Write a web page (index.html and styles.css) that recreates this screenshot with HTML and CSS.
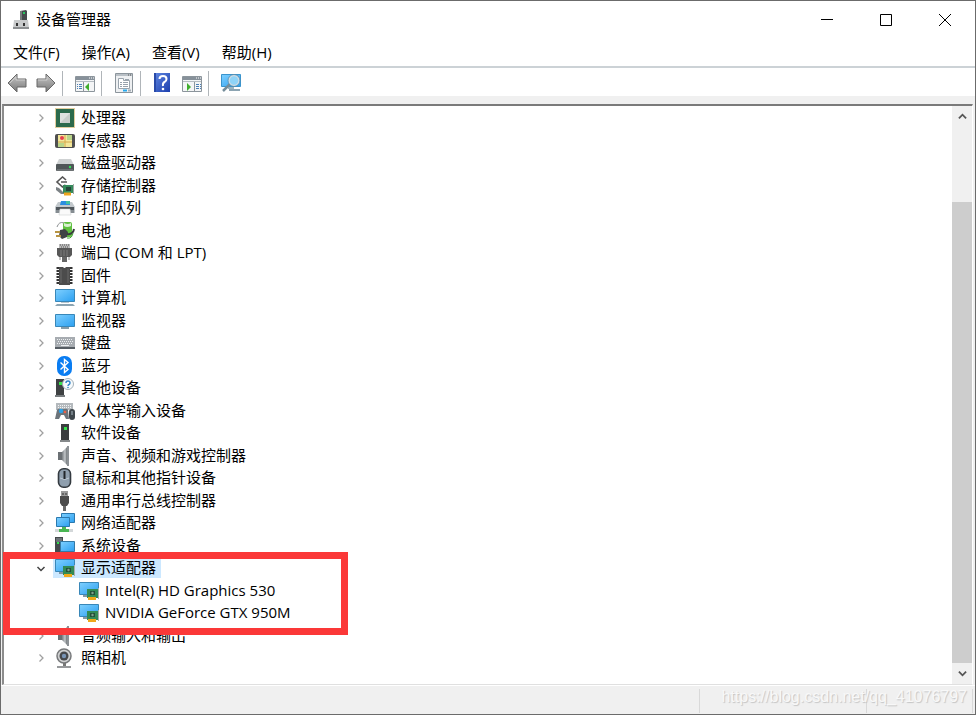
FILE: index.html
```html
<!DOCTYPE html>
<html lang="zh-CN">
<head>
    <meta charset="UTF-8">
    <meta name="viewport" content="width=device-width, initial-scale=1.0">
    <title>设备管理器</title>
    <link rel="stylesheet" href="styles.css">
</head>
<body>
    <!-- icon sprite -->
    <svg class="sprite" aria-hidden="true">
        <defs>
            <linearGradient id="g-screen" x1="0" y1="0" x2="1" y2="1">
                <stop offset="0" stop-color="#7fd0ff"/>
                <stop offset="1" stop-color="#2b9ff0"/>
            </linearGradient>
            <linearGradient id="g-metal" x1="0" y1="0" x2="0" y2="1">
                <stop offset="0" stop-color="#c9c9c9"/>
                <stop offset="1" stop-color="#777"/>
            </linearGradient>
            <linearGradient id="g-help" x1="0" y1="0" x2="1" y2="1">
                <stop offset="0" stop-color="#5f86e0"/>
                <stop offset="1" stop-color="#1c3fae"/>
            </linearGradient>
            <linearGradient id="g-cone" x1="0" y1="0" x2="1" y2="0">
                <stop offset="0" stop-color="#777c80"/>
                <stop offset="0.6" stop-color="#c3c7ca"/>
                <stop offset="1" stop-color="#6e7376"/>
            </linearGradient>
        </defs>
        <symbol id="i-app" viewBox="0 0 18 20">
            <path d="M8 1l6-1 1 1v10H8z" fill="#454a4d"/>
            <path d="M8 1l2 0v10H8z" fill="#777b7d"/>
            <rect x="11" y="2" width="2" height="2" fill="#27c860"/>
            <path d="M2 10h14l1 8H1z" fill="#c9cbcc"/>
            <path d="M1 17h16v2H1z" fill="#8d9092"/>
            <rect x="4" y="13" width="2" height="3" fill="#333"/>
            <rect x="11" y="13" width="2" height="3" fill="#333"/>
        </symbol>
        <symbol id="i-back" viewBox="0 0 20 20">
            <path d="M1 10l9-9v5h9v8h-9v5z" fill="url(#g-metal)" stroke="#696969" stroke-linejoin="round"/>
            <path d="M3 10l6-6v3h9" fill="none" stroke="#ccc"/>
        </symbol>
        <symbol id="i-forward" viewBox="0 0 20 20">
            <path d="M19 10l-9-9v5H1v8h9v5z" fill="url(#g-metal)" stroke="#696969" stroke-linejoin="round"/>
            <path d="M2 7h9V4" fill="none" stroke="#ccc"/>
        </symbol>
        <symbol id="i-tree" viewBox="0 0 20 20">
            <path d="M.5 3.500h19v15H.5z" fill="#f4f5f6" stroke="#8c959c"/>
            <path d="M1 4h18v3H1z" fill="#87919a"/>
            <path d="M14 5h1M16 5h1M18 5h1" stroke="#fff"/>
            <path d="M1 8.500h18" stroke="#b5bcc2"/>
            <path d="M8.500 9v9" stroke="#8c959c"/>
            <path d="M2 11.500h1m1 0h3M2 13.500h1m1 0h3M2 15.500h1m1 0h3" stroke="#4b7fb5"/>
            <path d="M14 10v8l-4-4z" fill="#3fae2c"/>
        </symbol>
        <symbol id="i-props" viewBox="0 0 20 20">
            <path d="M1.500.5h17v19h-17z" fill="#eef0f2" stroke="#8c959c"/>
            <path d="M2 1h16v2H2z" fill="#b9c0c6"/>
            <path d="M14 2h1M16 2h1" stroke="#555"/>
            <path d="M4.500 5.500h5v2h6v8h-11z" fill="#fff" stroke="#9aa4ad"/>
            <path d="M11 6.500h4" stroke="#9aa4ad"/>
            <path d="M6 9.500h2m1 0h5M6 11.500h2m1 0h5M6 13.500h2m1 0h5" stroke="#98a2ac"/>
            <path d="M9 17.500h4" stroke="#25a9ee" stroke-width="2"/>
            <path d="M14 17.500h3" stroke="#a7afb6" stroke-width="2"/>
        </symbol>
        <symbol id="i-help" viewBox="0 0 20 20">
            <path d="M1 0h16v19H1z" fill="url(#g-help)"/>
            <path d="M1 0h2v19H1z" fill="#294aa8"/>
            <path d="M6.500 6Q6.500 3 10 3t3.500 3q0 2-2 3t-1.500 4" fill="none" stroke="#fff" stroke-width="2"/>
            <circle cx="10" cy="16" r="1.300" fill="#fff"/>
        </symbol>
        <symbol id="i-action" viewBox="0 0 20 20">
            <path d="M.5 3.500h19v15H.5z" fill="#f4f5f6" stroke="#8c959c"/>
            <path d="M1 4h18v3H1z" fill="#87919a"/>
            <path d="M14 5h1M16 5h1M18 5h1" stroke="#fff"/>
            <path d="M1 8.500h18" stroke="#b5bcc2"/>
            <path d="M12.500 9v9" stroke="#8c959c"/>
            <path d="M14 11.500h3m1 0h1M14 13.500h3m1 0h1M14 15.500h3m1 0h1" stroke="#4b7fb5"/>
            <path d="M5 10v8l4-4z" fill="#3fae2c"/>
        </symbol>
        <symbol id="i-scan" viewBox="0 0 20 20">
            <path d="M.5 1.500h19v12H.5z" fill="url(#g-screen)" stroke="#3a94cd"/>
            <path d="M7 14h6v2H7z" fill="#9db4c0"/>
            <path d="M8 17h11" stroke="#8ca4b2" stroke-width="2"/>
            <path d="M9 11l-7 7" stroke="#758d9a" stroke-width="2.500"/>
            <circle cx="13" cy="7.500" r="5" fill="#8fd3f7" stroke="#cfdce3" stroke-width="1.500"/>
            <circle cx="13" cy="7.500" r="6" fill="none" stroke="#5f8ba6" stroke-width=".7"/>
        </symbol>

        <symbol id="i-cpu" viewBox="0 0 20 20">
            <path d="M.5.5h19v19H.5z" fill="none" stroke="#c59a3c" stroke-dasharray="1 1"/>
            <path d="M1 1h18v18H1z" fill="#2c6a4c"/>
            <path d="M5 5h10v10H5z" fill="#dfe2e0"/>
            <path d="M5 15L15 5v10z" fill="#c9cecb"/>
        </symbol>
        <symbol id="i-sensor" viewBox="0 0 20 20">
            <rect y="3" width="20" height="14" rx="2" fill="#505050"/>
            <path d="M3 4h14v12H3z" fill="#f3e79b"/>
            <path d="M12 4h5v5h-5zM3 12h6v4H3z" fill="#b9d58a"/>
            <path d="M3 11h14M10 4v12" stroke="#d3a94c"/>
            <circle cx="7" cy="7" r="2" fill="#e8404e"/>
        </symbol>
        <symbol id="i-disk" viewBox="0 0 20 20">
            <path d="M4 6h12l3 6H1z" fill="#cfd2d3"/>
            <rect x="1" y="11" width="18" height="7" rx="1" fill="#505658"/>
            <path d="M2 17h16" stroke="#898e90"/>
            <circle cx="15" cy="14" r="1.200" fill="#36e05b"/>
        </symbol>
        <symbol id="i-storage" viewBox="0 0 20 20">
            <path d="M11 4L7.500 1 2 6l5.500 5 3-2M6 6h6" fill="none" stroke="#555" stroke-width="1.600"/>
            <path d="M1 11l3 1 5 5v1H6l-5-4z" fill="#7c8285"/>
            <path d="M8 9h10v8H8z" fill="#358a5b"/>
            <path d="M11 11h5v4h-5z" fill="#24463a"/>
            <path d="M18.500 8v10" stroke="#a1aaa6"/>
            <path d="M9 18h7" stroke="#eda51e" stroke-width="3"/>
        </symbol>
        <symbol id="i-printer" viewBox="0 0 20 20">
            <path d="M3 4h14l3 5v6H0V9z" fill="#c3c9cd"/>
            <path d="M6 3h9v4H5z" fill="#2a8de0"/>
            <path d="M11 3h4v3h-4z" fill="#41c0a1"/>
            <path d="M1 9h18v3H1z" fill="#50575c"/>
            <path d="M1 12h18v3H1z" fill="#858c91"/>
            <path d="M5 11h10l1 6H4z" fill="#fafafa" stroke="#c5c8ca" stroke-width=".5"/>
        </symbol>
        <symbol id="i-battery" viewBox="0 0 20 20">
            <rect x="8" y="1" width="9" height="15" rx="2" fill="#5fc03f"/>
            <path d="M9 2q4 2 7 0v3q-4 2-7 0z" fill="#d8efd0"/>
            <path d="M2 6q2-6 7-4" fill="none" stroke="#8b8f90"/>
            <path d="M5 9l5-1 3 3-1 5-5 2-3-3z" fill="#3f4345"/>
            <path d="M0 11h5M1 15h5" stroke="#b79444" stroke-width="2"/>
            <path d="M12 13q6 1 7-5" fill="none" stroke="#383b3d" stroke-width="2"/>
            <path d="M12 17q5 1 6-5" fill="none" stroke="#45a33b"/>
        </symbol>
        <symbol id="i-port" viewBox="0 0 20 20">
            <path d="M4 1h11v4H4z" fill="#bbb"/>
            <path d="M5 2h9M6 4h7" stroke="#555" stroke-dasharray="1 1"/>
            <path d="M2 5h15v7l-2 2H4l-2-2z" fill="#575757"/>
            <path d="M6 7v6M9 7v6M12 7v6" stroke="#7d7d7d"/>
            <path d="M7 14h5v5H7z" fill="#666"/>
            <path d="M5 14v3M14 14v3" stroke="#888"/>
        </symbol>
        <symbol id="i-firmware" viewBox="0 0 20 20">
            <path d="M4 1v18M15 1v18" stroke="#333" stroke-width="5" stroke-dasharray="2 1"/>
            <path d="M4 1h4q1.500 2 3 0h4v18H4z" fill="#4c4c4c"/>
            <path d="M6 3v14M13 3v14" stroke="#686868"/>
        </symbol>
        <symbol id="i-computer" viewBox="0 0 20 20">
            <path d="M.5 1.500h19v12H.5z" fill="url(#g-screen)" stroke="#3987b8"/>
            <path d="M6 14h8v1H6z" fill="#b9c6ce"/>
            <path d="M2 16h16l2 2H0z" fill="#8ca4b2"/>
        </symbol>
        <symbol id="i-monitor" viewBox="0 0 20 20">
            <path d="M.5 3.500h19v12H.5z" fill="url(#g-screen)" stroke="#3987b8"/>
            <path d="M6 17h8" stroke="#879da9" stroke-width="2"/>
        </symbol>
        <symbol id="i-keyboard" viewBox="0 0 20 20">
            <path d="M0 4h20v10H0z" fill="#a7acb1"/>
            <path d="M0 14h20v2H0z" fill="#565d64"/>
            <path d="M2 6.500h16M3 8.500h15M2 10.500h16" stroke="#edf0f2" stroke-dasharray="1 1"/>
            <path d="M6 12.500h8" stroke="#edf0f2"/>
        </symbol>
        <symbol id="i-bluetooth" viewBox="0 0 20 20">
            <rect x="2" width="15" height="20" rx="7" fill="#0a7df2"/>
            <path d="M5.500 6.500l7.500 7-3.500 3V3.500L13 6.500l-7.500 7" fill="none" stroke="#fff" stroke-width="1.400"/>
        </symbol>
        <symbol id="i-other" viewBox="0 0 20 20">
            <path d="M1 1h8v16H1z" fill="#3e4143"/>
            <path d="M0 17h10v2H0z" fill="#777c7f"/>
            <rect x="4" y="4" width="3" height="3" fill="#37e24c"/>
            <circle cx="13" cy="6" r="5.500" fill="#f6fafc" stroke="#a5b1b8"/>
            <path d="M11 5q0-2 2-2t2 2q0 1-1 1.500T13 8" fill="none" stroke="#2f82c7" stroke-width="1.400"/>
            <circle cx="13" cy="9.500" r=".8" fill="#2f82c7"/>
        </symbol>
        <symbol id="i-hid" viewBox="0 0 20 20">
            <path d="M1 2h17v7H1z" fill="#b4b9bd"/>
            <path d="M3 4.500h14M3 6.500h14" stroke="#f2f4f5" stroke-dasharray="1 1"/>
            <path d="M2 9q1-2 4-1h3q3-1 4 1l1 9h-3l-2-4H6l-2 4H0z" fill="#6c747b"/>
            <circle cx="6" cy="10" r="2.200" fill="#2ba2e9"/>
            <circle cx="10" cy="11" r="1.300" fill="#eb6048"/>
            <rect x="14" y="8" width="6" height="11" rx="3" fill="#3e464c"/>
            <path d="M17 10v4" stroke="#a9b8c2"/>
        </symbol>
        <symbol id="i-software" viewBox="0 0 20 20">
            <path d="M6 1h8v16H6z" fill="#3b3d3f"/>
            <path d="M5 17h10v2H5z" fill="#85898b"/>
            <rect x="9" y="4" width="3" height="3" fill="#35e24b"/>
        </symbol>
        <symbol id="i-speaker" viewBox="0 0 20 20">
            <path d="M3 6h4v8H3z" fill="#6b7074"/>
            <path d="M7 6l5-5v18l-5-5z" fill="url(#g-cone)"/>
            <path d="M12 0h2v20h-2z" fill="#8d9296"/>
        </symbol>
        <symbol id="i-mouse" viewBox="0 0 20 20">
            <rect x="3.500" y=".8" width="12" height="18.400" rx="5" fill="#8f9fae" stroke="#343a40" stroke-width="1.600"/>
            <path d="M5 10q5 3 9 0" fill="none" stroke="#bdcad5"/>
            <path d="M9.500 3v8" stroke="#22272b" stroke-width="2"/>
        </symbol>
        <symbol id="i-usb" viewBox="0 0 20 20">
            <path d="M6 0h7v6H6z" fill="#9b9b9b"/>
            <path d="M8 2v2M11 2v2" stroke="#333"/>
            <path d="M5 5h9v7l-2 3H7l-2-3z" fill="#4c4c4c"/>
            <path d="M8 15h3v5H8z" fill="#696969"/>
        </symbol>
        <symbol id="i-network" viewBox="0 0 20 20">
            <path d="M6.500.5h13v9h-13z" fill="url(#g-screen)" stroke="#2b79ae"/>
            <path d="M1.500 4.500h13v9h-13z" fill="url(#g-screen)" stroke="#2b79ae"/>
            <path d="M0 16h18v3H0z" fill="#d3d7d9"/>
            <path d="M7 14h4v2h3v3H4v-3h3z" fill="#49b653"/>
        </symbol>
        <symbol id="i-system" viewBox="0 0 20 20">
            <path d="M0 1h8v17H0z" fill="#45494c"/>
            <path d="M1 3h6M1 5h6" stroke="#96a0a5"/>
            <rect x="2" y="6" width="2" height="2" fill="#34df4d"/>
            <path d="M5.500 5.500h14v10h-14z" fill="url(#g-screen)" stroke="#3479a5"/>
            <path d="M8 17h9" stroke="#8d9fa9" stroke-width="2"/>
        </symbol>
        <symbol id="i-display" viewBox="0 0 20 20">
            <path d="M.5 1.500h19v12H.5z" fill="url(#g-screen)" stroke="#3987b8"/>
            <path d="M4 15h5" stroke="#8499a5" stroke-width="2"/>
            <path d="M8 8h11v9H8z" fill="#328a55"/>
            <path d="M11 10h5v4h-5z" fill="#23523a"/>
            <circle cx="13.500" cy="12" r="1.200" fill="#7fa18d"/>
            <path d="M19.500 7v11" stroke="#a8aeb0"/>
            <path d="M9 17.500h8" stroke="#efa91b" stroke-width="3"/>
        </symbol>
        <symbol id="i-camera" viewBox="0 0 20 20">
            <circle cx="9" cy="8" r="7" fill="#d0d1d2" stroke="#77797b" stroke-width="1.500"/>
            <circle cx="9" cy="8" r="4.500" fill="#46484b"/>
            <circle cx="9" cy="8" r="2.200" fill="#7894b5"/>
            <path d="M8 15h3v3H8z" fill="#777"/>
            <path d="M2 19h14" stroke="#96989a" stroke-width="2"/>
        </symbol>
        <symbol id="i-closed" viewBox="0 0 10 10">
            <path d="M3.500 1.500L7 5 3.500 8.500" fill="none" stroke="#a0a0a0" stroke-width="1.300"/>
        </symbol>
        <symbol id="i-open" viewBox="0 0 10 10">
            <path d="M1.500 4L5 7.500 8.500 4" fill="none" stroke="#444" stroke-width="1.500"/>
        </symbol>
    </svg>

    <div class="window">
        <header class="titlebar">
            <svg class="app-icon"><use href="#i-app"/></svg>
            <h1>设备管理器</h1>
            <div class="window-buttons">
                <button type="button" aria-label="最小化"><svg viewBox="0 0 12 12"><path d="M0 5.500h12"/></svg></button>
                <button type="button" aria-label="最大化"><svg viewBox="0 0 12 12"><path d="M.5.500h11v11H.5z"/></svg></button>
                <button type="button" aria-label="关闭"><svg viewBox="0 0 12 12"><path d="M0 0l12 12M12 0L0 12"/></svg></button>
            </div>
        </header>

        <nav class="menubar">
            <button type="button">文件(F)</button>
            <button type="button">操作(A)</button>
            <button type="button">查看(V)</button>
            <button type="button">帮助(H)</button>
        </nav>

        <div class="toolbar">
            <button type="button" aria-label="后退"><svg class="icon"><use href="#i-back"/></svg></button>
            <button type="button" aria-label="前进"><svg class="icon"><use href="#i-forward"/></svg></button>
            <span class="separator"></span>
            <button type="button" aria-label="显示/隐藏控制台树"><svg class="icon"><use href="#i-tree"/></svg></button>
            <span class="separator"></span>
            <button type="button" aria-label="属性"><svg class="icon"><use href="#i-props"/></svg></button>
            <span class="separator"></span>
            <button type="button" aria-label="帮助"><svg class="icon"><use href="#i-help"/></svg></button>
            <button type="button" aria-label="显示/隐藏操作窗格"><svg class="icon"><use href="#i-action"/></svg></button>
            <span class="separator"></span>
            <button type="button" aria-label="扫描检测硬件改动"><svg class="icon"><use href="#i-scan"/></svg></button>
        </div>

        <main class="panel">
            <ul class="tree">
                <li><button type="button" class="expander" aria-label="展开"><svg><use href="#i-closed"/></svg></button><svg class="icon"><use href="#i-cpu"/></svg><span class="name">处理器</span></li>
                <li><button type="button" class="expander" aria-label="展开"><svg><use href="#i-closed"/></svg></button><svg class="icon"><use href="#i-sensor"/></svg><span class="name">传感器</span></li>
                <li><button type="button" class="expander" aria-label="展开"><svg><use href="#i-closed"/></svg></button><svg class="icon"><use href="#i-disk"/></svg><span class="name">磁盘驱动器</span></li>
                <li><button type="button" class="expander" aria-label="展开"><svg><use href="#i-closed"/></svg></button><svg class="icon"><use href="#i-storage"/></svg><span class="name">存储控制器</span></li>
                <li><button type="button" class="expander" aria-label="展开"><svg><use href="#i-closed"/></svg></button><svg class="icon"><use href="#i-printer"/></svg><span class="name">打印队列</span></li>
                <li><button type="button" class="expander" aria-label="展开"><svg><use href="#i-closed"/></svg></button><svg class="icon"><use href="#i-battery"/></svg><span class="name">电池</span></li>
                <li><button type="button" class="expander" aria-label="展开"><svg><use href="#i-closed"/></svg></button><svg class="icon"><use href="#i-port"/></svg><span class="name">端口 (COM 和 LPT)</span></li>
                <li><button type="button" class="expander" aria-label="展开"><svg><use href="#i-closed"/></svg></button><svg class="icon"><use href="#i-firmware"/></svg><span class="name">固件</span></li>
                <li><button type="button" class="expander" aria-label="展开"><svg><use href="#i-closed"/></svg></button><svg class="icon"><use href="#i-computer"/></svg><span class="name">计算机</span></li>
                <li><button type="button" class="expander" aria-label="展开"><svg><use href="#i-closed"/></svg></button><svg class="icon"><use href="#i-monitor"/></svg><span class="name">监视器</span></li>
                <li><button type="button" class="expander" aria-label="展开"><svg><use href="#i-closed"/></svg></button><svg class="icon"><use href="#i-keyboard"/></svg><span class="name">键盘</span></li>
                <li><button type="button" class="expander" aria-label="展开"><svg><use href="#i-closed"/></svg></button><svg class="icon"><use href="#i-bluetooth"/></svg><span class="name">蓝牙</span></li>
                <li><button type="button" class="expander" aria-label="展开"><svg><use href="#i-closed"/></svg></button><svg class="icon"><use href="#i-other"/></svg><span class="name">其他设备</span></li>
                <li><button type="button" class="expander" aria-label="展开"><svg><use href="#i-closed"/></svg></button><svg class="icon"><use href="#i-hid"/></svg><span class="name">人体学输入设备</span></li>
                <li><button type="button" class="expander" aria-label="展开"><svg><use href="#i-closed"/></svg></button><svg class="icon"><use href="#i-software"/></svg><span class="name">软件设备</span></li>
                <li><button type="button" class="expander" aria-label="展开"><svg><use href="#i-closed"/></svg></button><svg class="icon"><use href="#i-speaker"/></svg><span class="name">声音、视频和游戏控制器</span></li>
                <li><button type="button" class="expander" aria-label="展开"><svg><use href="#i-closed"/></svg></button><svg class="icon"><use href="#i-mouse"/></svg><span class="name">鼠标和其他指针设备</span></li>
                <li><button type="button" class="expander" aria-label="展开"><svg><use href="#i-closed"/></svg></button><svg class="icon"><use href="#i-usb"/></svg><span class="name">通用串行总线控制器</span></li>
                <li><button type="button" class="expander" aria-label="展开"><svg><use href="#i-closed"/></svg></button><svg class="icon"><use href="#i-network"/></svg><span class="name">网络适配器</span></li>
                <li><button type="button" class="expander" aria-label="展开"><svg><use href="#i-closed"/></svg></button><svg class="icon"><use href="#i-system"/></svg><span class="name">系统设备</span></li>
                <li class="selected"><button type="button" class="expander" aria-label="折叠"><svg><use href="#i-open"/></svg></button><svg class="icon"><use href="#i-display"/></svg><span class="name">显示适配器</span></li>
                <li class="child"><svg class="icon"><use href="#i-display"/></svg><span class="name">Intel(R) HD Graphics 530</span></li>
                <li class="child"><svg class="icon"><use href="#i-display"/></svg><span class="name">NVIDIA GeForce GTX 950M</span></li>
                <li><button type="button" class="expander" aria-label="展开"><svg><use href="#i-closed"/></svg></button><svg class="icon"><use href="#i-speaker"/></svg><span class="name">音频输入和输出</span></li>
                <li><button type="button" class="expander" aria-label="展开"><svg><use href="#i-closed"/></svg></button><svg class="icon"><use href="#i-camera"/></svg><span class="name">照相机</span></li>
            </ul>
            <div class="scrollbar">
                <button type="button" aria-label="向上滚动"><svg viewBox="0 0 10 10"><path d="M1 7l4-4 4 4"/></svg></button>
                <div class="track"><div class="thumb"></div></div>
                <button type="button" aria-label="向下滚动"><svg viewBox="0 0 10 10"><path d="M1 3l4 4 4-4"/></svg></button>
            </div>
            <div class="marker"></div>
        </main>

        <footer class="statusbar">
            <span class="cell"></span>
            <span class="cell"></span>
            <span class="cell"></span>
            <span class="watermark">https://blog.csdn.net/qq_41076797</span>
        </footer>
    </div>
</body>
</html>
```
FILE: styles.css
```css
* {
    box-sizing: border-box;
}

body {
    margin: 0;
    font-family: "Open Sans", "Noto Sans CJK SC", sans-serif;
    font-size: 15px;
    line-height: 18px;
    color: #000;
    background-color: #fff;
}

button {
    padding: 0;
    border: none;
    background: none;
    font: inherit;
    color: inherit;
}

svg {
    display: block;
}

.sprite {
    position: absolute;
    width: 0;
    height: 0;
}

.icon {
    width: 20px;
    height: 20px;
    flex: none;
}

.window {
    display: flex;
    flex-direction: column;
    min-height: 100vh;
    border: 1px solid #6b6b6b;
    background-color: #f0f0f0;
}

/* title bar */
.titlebar {
    display: flex;
    align-items: center;
    height: 37px;
    padding: 0 1px 0 11px;
    background-color: #fff;
}

.app-icon {
    width: 18px;
    height: 20px;
}

.titlebar h1 {
    margin: 0 0 0 6px;
    padding-bottom: 2px;
    font-size: 15px;
    font-weight: normal;
}

.window-buttons {
    display: flex;
    align-self: stretch;
    margin-left: auto;
}

.window-buttons button {
    display: flex;
    align-items: center;
    justify-content: center;
    width: 59px;
}

.window-buttons svg {
    width: 12px;
    height: 12px;
    fill: none;
    stroke: #000;
}

/* menu */
.menubar {
    display: flex;
    gap: 2px;
    height: 30px;
    padding-left: 2px;
    background-color: #fff;
    border-bottom: 2px solid #ccd2d6;
}

.menubar button {
    padding: 0 10px;
}

/* toolbar */
.toolbar {
    display: flex;
    align-items: center;
    height: 28px;
    padding: 2px 0 0 6px;
    background-color: #fff;
}

.toolbar button + button {
    margin-left: 9px;
}

.separator {
    width: 1px;
    height: 25px;
    margin: 0 12px 0 6px;
    background-color: #b0b5b9;
}

/* device tree */
.panel {
    position: relative;
    display: flex;
    flex: 1;
    margin: 8px 2px 0 1px;
    border-top: 2px solid #7a7a7a;
    border-left: 2px solid #8c8c8c;
    border-right: 1px solid #fff;
    border-bottom: 1px solid #e0e0e0;
    background-color: #fff;
}

.tree {
    display: grid;
    grid-auto-rows: 22px 23px;
    align-content: start;
    flex: 1;
    margin: 0;
    padding: 1px 0 15px 32px;
    list-style: none;
}

.tree li {
    display: flex;
    align-items: center;
}

.expander {
    width: 10px;
    margin-right: 9px;
}

.expander svg {
    width: 10px;
    height: 10px;
}

.name {
    padding: 0 5px 2px 6px;
    white-space: nowrap;
}

.selected .icon,
.selected .name {
    background-color: #cce8ff;
}

.selected .icon {
    box-shadow: -2px 0 0 #cce8ff;
}

.child {
    padding-left: 43px;
}

.scrollbar {
    display: flex;
    flex-direction: column;
    width: 20px;
    background-color: #f0f0f0;
}

.scrollbar button {
    display: flex;
    align-items: center;
    justify-content: center;
    height: 21px;
}

.scrollbar svg {
    width: 9px;
    height: 9px;
    fill: none;
    stroke: #555;
    stroke-width: 2;
}

.track {
    display: flex;
    align-items: flex-end;
    flex: 1;
}

.thumb {
    width: 100%;
    height: 86%;
    background-color: #cdcdcd;
}

/* red frame around the display adapters */
.marker {
    position: absolute;
    top: 446px;
    left: -1px;
    width: 345px;
    height: 83px;
    border: 7px solid #fb3838;
}

/* status bar */
.statusbar {
    position: relative;
    display: flex;
    height: 29px;
    padding: 3px 2px 1px 0;
    border-top: 1px solid #fff;
}

.cell {
    width: 106px;
    border-right: 1px solid #d9d9d9;
}

.cell:first-child {
    flex: 1;
}

.cell:nth-child(2) {
    width: 167px;
}

.watermark {
    position: absolute;
    right: 8px;
    top: 2px;
    font-family: "Liberation Sans", Arial, sans-serif;
    font-size: 16px;
    color: #f8f8f8;
    text-shadow: 1px 1px 1px #c4c4c4;
}
```
